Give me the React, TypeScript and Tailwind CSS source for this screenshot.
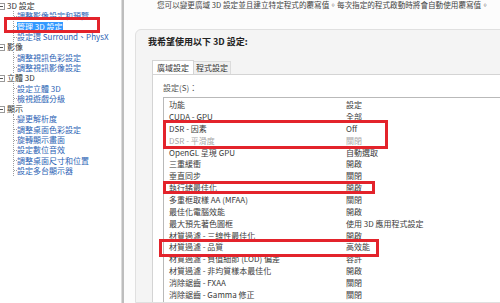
import React from "react";

const tree = [
  { title: "3D 設定", items: ["調整影像設定和預覽", "管理 3D 設定", "設定環 Surround、PhysX"] },
  { title: "影像", items: ["調整視訊色彩設定", "調整視訊影像設定"] },
  { title: "立體 3D", items: ["設定立體 3D", "檢視遊戲分級"] },
  {
    title: "顯示",
    items: ["變更解析度", "調整桌面色彩設定", "旋轉顯示畫面", "設定數位音效", "調整桌面尺寸和位置", "設定多台顯示器"],
  },
];

const rows: { name: string; value: string; off?: boolean }[] = [
  { name: "CUDA - GPU", value: "全部" },
  { name: "DSR - 因素", value: "Off" },
  { name: "DSR - 平滑度", value: "關閉", off: true },
  { name: "OpenGL 呈現 GPU", value: "自動選取" },
  { name: "三重緩衝", value: "開啟" },
  { name: "垂直同步", value: "關閉" },
  { name: "執行緒最佳化", value: "開啟" },
  { name: "多重框取樣 AA (MFAA)", value: "關閉" },
  { name: "最佳化電腦效能", value: "開啟" },
  { name: "最大預先著色圖框", value: "使用 3D 應用程式設定" },
  { name: "材質過濾 - 三線性最佳化", value: "開啟" },
  { name: "材質過濾 - 品質", value: "高效能" },
  { name: "材質過濾 - 負值細節 (LOD) 偏差", value: "容許" },
  { name: "材質過濾 - 非均質樣本最佳化", value: "開啟" },
  { name: "消除鋸齒 - FXAA", value: "關閉" },
  { name: "消除鋸齒 - Gamma 修正", value: "關閉" },
];

const App = () => {
  return (
    <div className="relative flex w-[500px] h-[303px] overflow-hidden bg-white font-['Noto_Sans_CJK_TC','Noto_Sans',sans-serif] text-[8px] leading-none">
      {/* left tree */}
      <div className="w-[121px] shrink-0 bg-white pt-[1px]">
        {tree.map((group) => (
          <div key={group.title}>
            <div className="flex items-center h-[10.3px] text-[#333]">
              <span className="-ml-[2px] mr-[2px] flex items-center justify-center w-[7px] h-[7px] border border-[#9a9a9a] bg-white">
                <span className="w-[3px] h-px bg-[#555]" />
              </span>
              <span>{group.title}</span>
            </div>
            <div className="ml-[13px] border-l border-dotted border-[#a0a0a0]">
              {group.items.map((item) => (
                <div key={item} className="flex items-center h-[10.3px]">
                  <span className="w-[3px] border-t border-dotted border-[#a0a0a0]" />
                  <span
                    className={
                      item === "管理 3D 設定"
                        ? "bg-[#3399ff] text-white h-[9px] flex items-center"
                        : "text-[#2c63b5] whitespace-nowrap"
                    }
                  >
                    {item}
                  </span>
                </div>
              ))}
            </div>
          </div>
        ))}
      </div>
      <div className="w-[3px] shrink-0 border-l border-[#dcdcdc] bg-[#bdbdbd]" />

      {/* right content */}
      <div className="flex flex-col flex-1 min-w-0 bg-[#fcfcfc]">
        <div className="h-[11px] pl-[33px] pt-[1px] text-[7.6px] text-[#444] whitespace-nowrap">
          您可以變更廣域 3D 設定並且建立特定程式的覆寫值。每次指定的程式啟動時將會自動使用覆寫值。
        </div>
        <div className="flex flex-col flex-1 ml-[11px] mt-[18px] -mr-[4px] rounded-tl-[6px] border border-[#e0e0e0] bg-[#f4f4f4]">
          <div className="pl-[12px] pt-[7px] h-[30px] text-[9px] font-bold text-[#222]">
            我希望使用以下 3D 設定:
          </div>
          <div className="flex ml-[16px] h-[14px] text-[#333]">
            <div className="flex items-center px-[4px] bg-white border border-b-0 border-[#d4d4d4]">廣域設定</div>
            <div className="flex items-center px-[2px] mt-[1px] bg-[#f0f0f0] border-t border-r border-[#dcdcdc]">
              程式設定
            </div>
          </div>
          <div className="flex flex-col flex-1 ml-[16px] bg-white border-l border-t border-[#d4d4d4] pl-[10px]">
            <div className="h-[22px] pt-[9px] text-[#555]">設定(S)：</div>
            <div className="flex-1 border-l border-t border-[#b9b9b9] pl-[5px] text-[#3a3a3a]">
              <div className="flex items-center h-[13px]">
                <span className="w-[177px]">功能</span>
                <span>設定</span>
              </div>
              {rows.map((r) => (
                <div
                  key={r.name}
                  className={`flex items-center h-[11.87px] whitespace-nowrap ${r.off ? "text-[#a8a8a8]" : ""}`}
                >
                  <span className="w-[177px] shrink-0">{r.name}</span>
                  <span>{r.value}</span>
                </div>
              ))}
            </div>
          </div>
        </div>
      </div>

      {/* red highlight boxes */}
      <div className="absolute left-[4px] top-[17px] w-[96px] h-[16px] border-[3px] border-[#e3232b]" />
      <div className="absolute left-[163px] top-[120px] w-[225px] h-[29px] border-[3px] border-[#e3232b]" />
      <div className="absolute left-[163px] top-[181px] w-[212px] h-[13px] border-[3px] border-[#e3232b]" />
      <div className="absolute left-[159px] top-[239px] w-[220px] h-[18px] border-[3px] border-[#e3232b]" />
    </div>
  );
};

export default App;
